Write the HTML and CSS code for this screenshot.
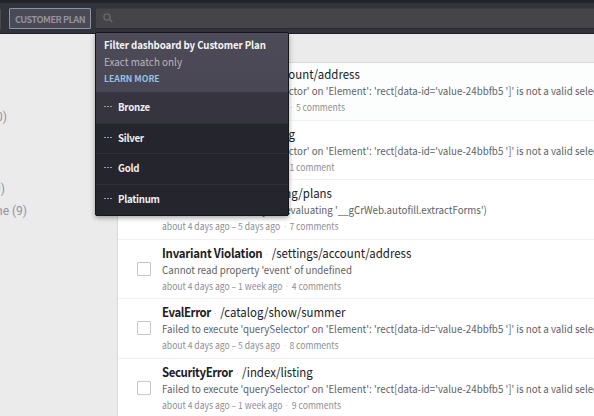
FILE: index.html
```html
<!DOCTYPE html>
<html lang="en">
<head>
<meta charset="utf-8">
<title>Error dashboard</title>
<link rel="stylesheet" href="styles.css">
</head>
<body>
<header class="topbar">
  <div class="filter-edge"></div>
  <button class="filter-button">CUSTOMER PLAN</button>
  <div class="search">
    <svg class="search-icon" viewBox="0 0 10 10"><circle cx="4" cy="4" r="3.1"/><path d="M6.3 6.3 9.3 9.3"/></svg>
    <section class="menu">
      <div class="menu-head">
        <h2>Filter dashboard by Customer Plan</h2>
        <p>Exact match only</p>
        <a>LEARN MORE</a>
      </div>
      <ul>
        <li class="active"><i class="dots"></i><span>Bronze</span></li>
        <li><i class="dots"></i><span>Silver</span></li>
        <li><i class="dots"></i><span>Gold</span></li>
        <li><i class="dots"></i><span>Platinum</span></li>
      </ul>
    </section>
  </div>
</header>
<div class="page">
  <aside class="sidebar">
    <span class="count first">(10)</span>
    <span class="count second">(9)</span>
    <span class="count third">Chrome (9)</span>
  </aside>
  <main class="list">
    <article class="row lead"><i class="check"></i><div class="body">
      <h3><b>EvalError</b><i class="sep"></i>/settings/account/address</h3>
      <p>Failed to execute 'querySelector' on 'Element': 'rect[data-id='value-24bbfb5 ']' is not a valid selector.</p>
      <small>about 4 days ago – 2 weeks ago<i class="sep"></i>5 comments</small>
    </div></article>
    <article class="row"><i class="check"></i><div class="body">
      <h3><b>TypeError</b><i class="sep"></i>/index/listing</h3>
      <p>Failed to execute 'querySelector' on 'Element': 'rect[data-id='value-24bbfb5 ']' is not a valid selector.</p>
      <small>about 4 days ago – 5 days ago<i class="sep"></i>1 comment</small>
    </div></article>
    <article class="row"><i class="check"></i><div class="body">
      <h3><b class="wide">SecurityError</b><i class="sep"></i>/us/listing/plans</h3>
      <p>undefined is not an object (evaluating '__gCrWeb.autofill.extractForms')</p>
      <small>about 4 days ago – 5 days ago<i class="sep"></i>7 comments</small>
    </div></article>
    <article class="row"><i class="check"></i><div class="body">
      <h3><b class="wide">Invariant Violation</b><i class="sep"></i>/settings/account/address</h3>
      <p>Cannot read property 'event' of undefined</p>
      <small>about 4 days ago – 1 week ago<i class="sep"></i>4 comments</small>
    </div></article>
    <article class="row"><i class="check"></i><div class="body">
      <h3><b>EvalError</b><i class="sep"></i>/catalog/show/summer</h3>
      <p>Failed to execute 'querySelector' on 'Element': 'rect[data-id='value-24bbfb5 ']' is not a valid selector.</p>
      <small>about 4 days ago – 5 days ago<i class="sep"></i>8 comments</small>
    </div></article>
    <article class="row"><i class="check"></i><div class="body">
      <h3><b>SecurityError</b><i class="sep"></i>/index/listing</h3>
      <p>Failed to execute 'querySelector' on 'Element': 'rect[data-id='value-24bbfb5 ']' is not a valid selector.</p>
      <small>about 4 days ago – 1 week ago<i class="sep"></i>9 comments</small>
    </div></article>
  </main>
</div>
</body>
</html>
```

FILE: styles.css
```css
* { box-sizing: border-box; }
body, h2, h3, p, ul { margin: 0; padding: 0; }
body {
  width: 594px;
  height: 416px;
  overflow: hidden;
  background: #ebebeb;
  font-family: "Noto Sans CJK SC", "Noto Sans", sans-serif;
}
.topbar {
  display: flex;
  height: 34px;
  padding-top: 5px;
  border-top: 3px solid #22222a;
  border-bottom: 1px solid #23222c;
  background: #33333a;
}
.filter-edge { width: 1px; height: 20px; margin-top: 1px; background: #4a4955; }
.filter-button {
  width: 82px;
  height: 21px;
  margin: 0 5px 0 8px;
  padding: 0;
  border: 1px solid #8198ae;
  border-radius: 1px;
  background: #4a4954;
  color: #93939b;
  font: 700 9.2px/18px "Noto Sans CJK SC", sans-serif;
  letter-spacing: -.5px;
  white-space: nowrap;
}
.search {
  position: relative;
  flex: 1;
  height: 21px;
  padding: 4px 7px;
  border-bottom: 1px solid #29292f;
  border-top: 1px solid #3b3b41;
  background: #454549;
}
.search-icon { display: block; width: 10px; height: 10px; fill: none; stroke: #68686c; stroke-width: 1.4; }
.menu {
  position: absolute;
  z-index: 2;
  left: -1px;
  top: 23px;
  width: 194px;
  height: 184px;
  border: 1px solid #15151b;
  border-radius: 2px;
  background: #25252e;
  box-shadow: 0 2px 5px rgba(0, 0, 0, .35);
}
.menu-head {
  height: 59px;
  padding: 4px 0 0 8px;
  background: linear-gradient(#4c4b57, #484753);
  white-space: nowrap;
}
.menu-head h2, .menu-head p, .menu span, .body {
  transform: scaleX(.915);
  transform-origin: left;
}
.menu-head h2 { width: 200px; color: #f5f5f7; font-size: 10.6px; line-height: 16px; letter-spacing: -.1px; }
.menu-head p { color: #b7b7be; font-size: 10.8px; line-height: 17px; }
.menu-head a { display: block; color: #94c1e8; font-size: 8.7px; font-weight: 700; line-height: 17px; }
.menu ul { list-style: none; }
.menu li {
  display: flex;
  align-items: center;
  height: 30.6px;
  padding: 0 0 2px 8px;
  border-top: 1px solid #303039;
  color: #efeff2;
  font-size: 10.6px;
  font-weight: 700;
  letter-spacing: -.3px;
}
.menu li.active { background: #36353f; border-color: #36353f; }
.dots {
  width: 8px;
  height: 1px;
  margin-right: 5.5px;
  background: repeating-linear-gradient(90deg, #8e9aaa 0 2px, transparent 2px 3px);
}
.page { display: flex; height: 382px; }
.sidebar {
  display: flex;
  flex: 0 0 117px;
  flex-direction: column;
  align-items: flex-start;
  color: #939396;
  font-family: Roboto, sans-serif;
  font-size: 12px;
  line-height: 16px;
}
.count { display: flex; justify-content: flex-end; white-space: nowrap; }
.first { width: 7px; margin-top: 75px; }
.second { width: 5px; margin-top: 56px; }
.third { width: 27px; margin-top: 6px; }
.list {
  flex: 1;
  min-width: 0;
  margin-top: 28px;
  border-top: 1px solid #dadada;
  border-left: 1px solid #dadada;
  background: #fff;
  overflow: hidden;
}
.row {
  display: flex;
  height: 59.6px;
  padding: 4px 0 0 18.5px;
  border-top: 1px solid #f1f1f1;
}
.lead { height: 56.7px; padding-top: 2px; border-top: 0; background: #fcfefd; }
.check {
  flex: none;
  width: 14px;
  height: 14px;
  margin: 18px 11.5px 0 0;
  border: 1px solid #c5c5c8;
  border-radius: 1px;
  background: #fff;
}
.body { white-space: nowrap; }
.body h3 { color: #202027; font-size: 12.5px; font-weight: 400; line-height: 17px; }
.body b { letter-spacing: -.45px; }
.body .wide { letter-spacing: -.25px; }
.body p { color: #626268; font-size: 10.65px; line-height: 17px; }
.body small { display: block; color: #8e8e92; font-size: 9.4px; line-height: 16px; }
.sep {
  display: inline-block;
  width: 1px;
  height: 1px;
  margin: 0 4.6px;
  vertical-align: 3px;
  background: #c8c8cb;
}
```
